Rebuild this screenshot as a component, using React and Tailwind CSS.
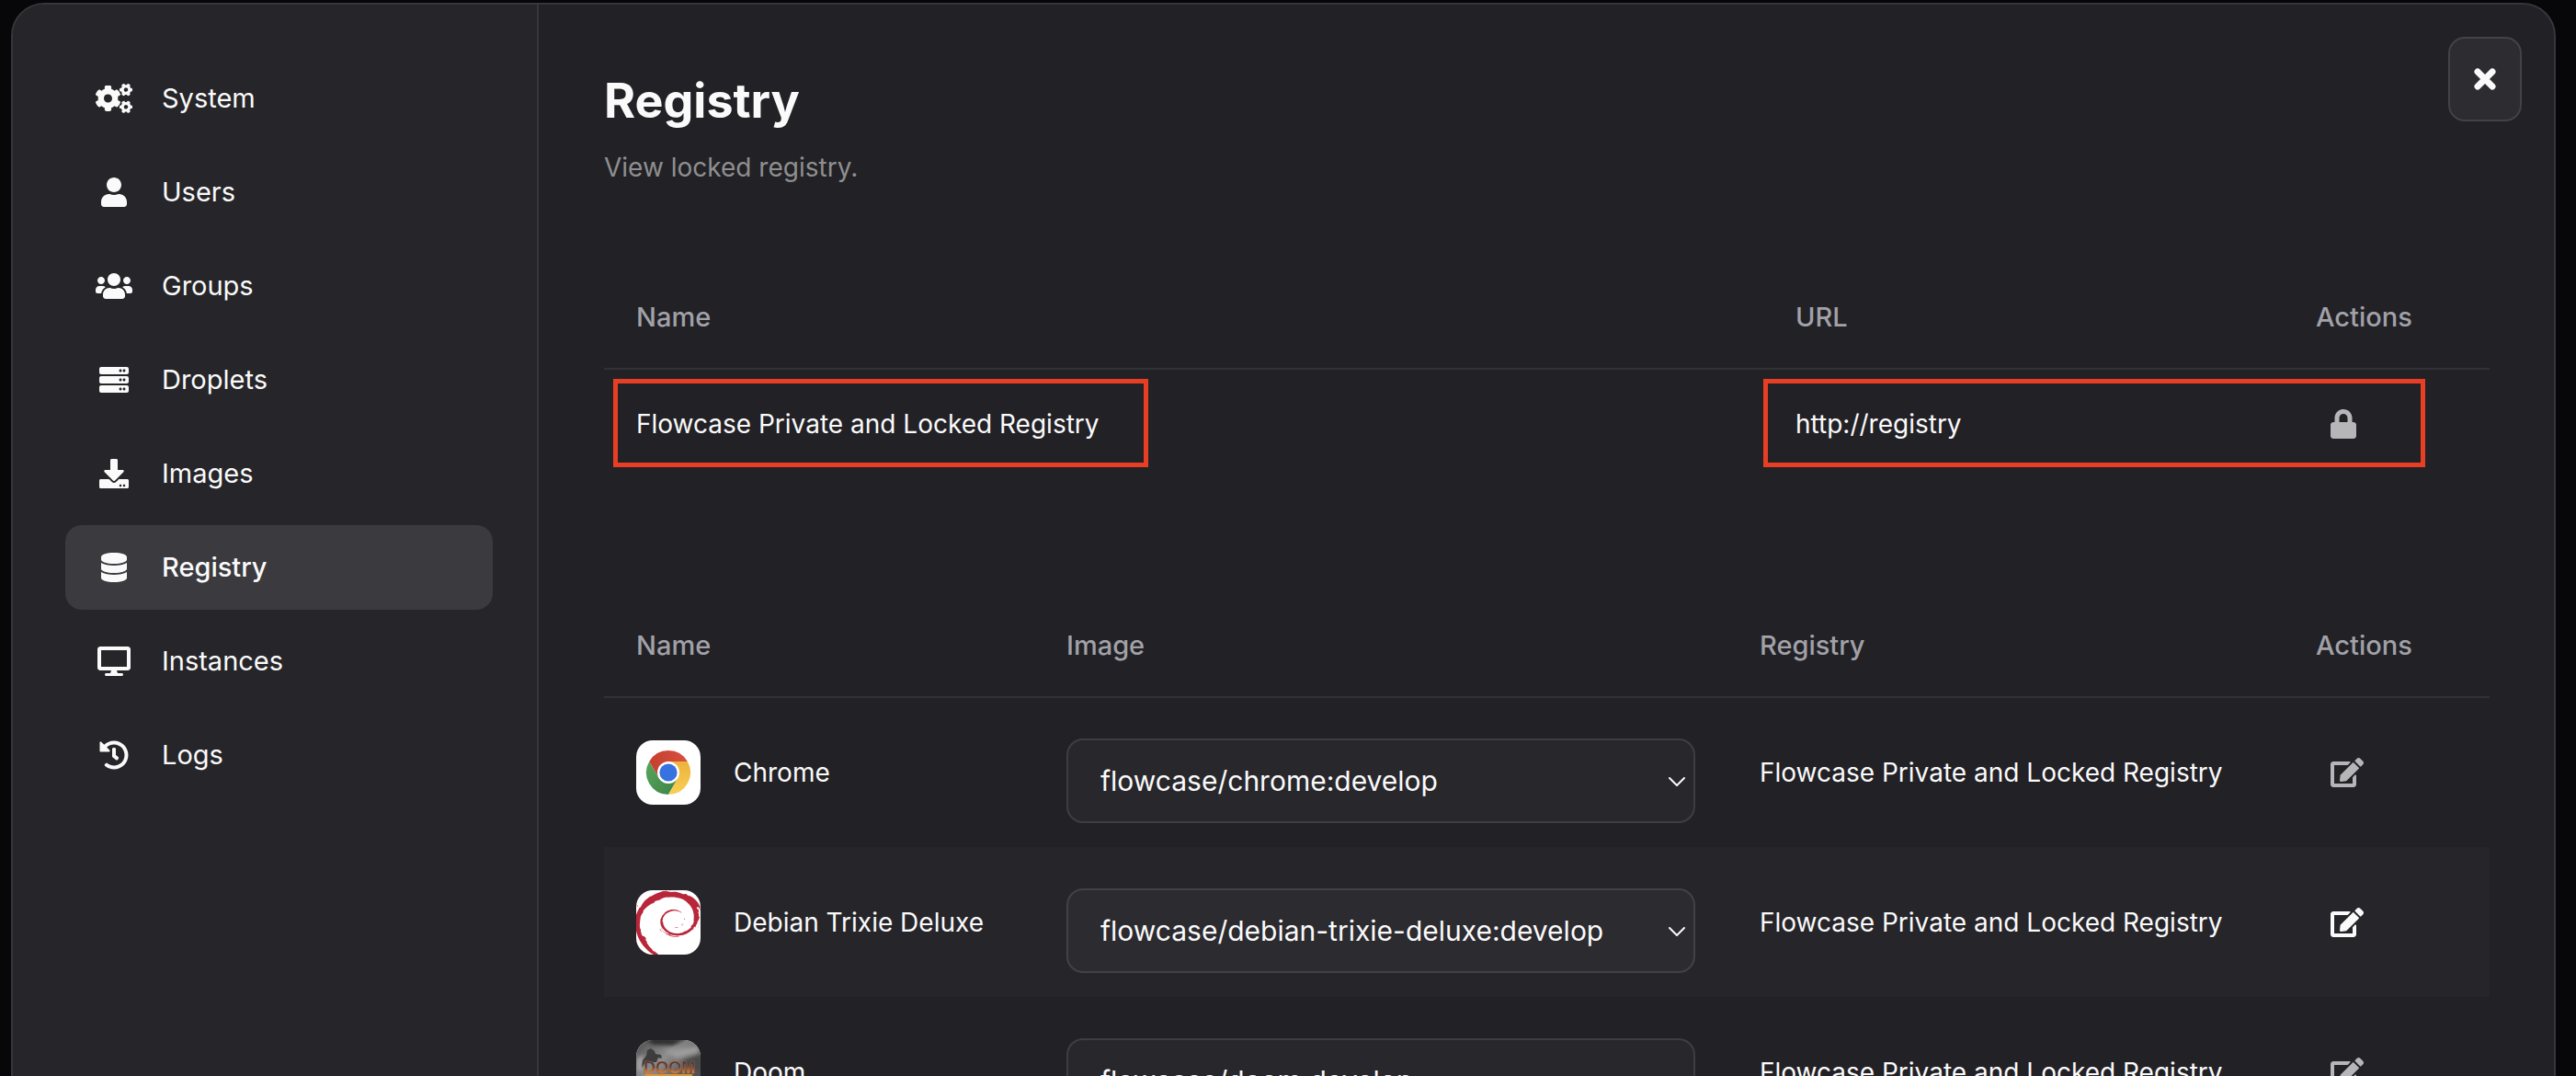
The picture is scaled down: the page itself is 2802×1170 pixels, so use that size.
import React from "react";
import {
  FaCogs,
  FaUser,
  FaUsers,
  FaServer,
  FaDownload,
  FaDatabase,
  FaDesktop,
  FaHistory,
  FaLock,
  FaEdit,
} from "react-icons/fa";
import { SiDebian } from "react-icons/si";

const NAV = [
  { label: "System", Icon: FaCogs, size: "h-8 w-10" },
  { label: "Users", Icon: FaUser, size: "h-8 w-7" },
  { label: "Groups", Icon: FaUsers, size: "h-8 w-10" },
  { label: "Droplets", Icon: FaServer, size: "h-8 w-8" },
  { label: "Images", Icon: FaDownload, size: "h-8 w-8" },
  { label: "Registry", Icon: FaDatabase, size: "h-8 w-7", active: true },
  { label: "Instances", Icon: FaDesktop, size: "h-8 w-9" },
  { label: "Logs", Icon: FaHistory, size: "h-8 w-8" },
];

const REGISTRY = "Flowcase Private and Locked Registry";

function ChromeLogo() {
  return (
    <svg viewBox="-35 -35 70 70" className="size-full" aria-hidden="true">
      <defs>
        <linearGradient id="chrome-red" x1="0" x2="1">
          <stop offset="0" stopColor="#c5402f" />
          <stop offset="1" stopColor="#d9503f" />
        </linearGradient>
        <linearGradient id="chrome-green" x1="0" x2="1" y1="0" y2="1">
          <stop offset="0" stopColor="#58a55c" />
          <stop offset="1" stopColor="#3d8446" />
        </linearGradient>
        <linearGradient id="chrome-yellow" x1="0" x2="0" y1="0" y2="1">
          <stop offset="0" stopColor="#edb23a" />
          <stop offset="1" stopColor="#f8d057" />
        </linearGradient>
      </defs>
      <path d="M-20.8 -12A24 24 0 0 1 20.8 -12L0 -12L-10.4 6Z" fill="url(#chrome-red)" />
      <path d="M-20.8 -12A24 24 0 0 0 0 24L10.4 6L-10.4 6Z" fill="url(#chrome-green)" />
      <path d="M20.8 -12A24 24 0 0 1 0 24L10.4 6L0 -12Z" fill="url(#chrome-yellow)" />
      <circle r="12" fill="#fff" />
      <circle r="9.6" fill="#3871e0" />
    </svg>
  );
}

function DebianLogo() {
  return (
    <SiDebian
      className="h-[76px] w-[90px] shrink-0 text-[#b9263a]"
      preserveAspectRatio="none"
      aria-hidden="true"
    />
  );
}

function DoomLogo() {
  return (
    <svg viewBox="0 0 70 70" className="size-full" aria-hidden="true">
      <defs>
        <linearGradient id="doom-sky" x1="0" x2="1" y1="0" y2="1">
          <stop offset="0" stopColor="#4c4c4c" />
          <stop offset="0.35" stopColor="#8e8e8e" />
          <stop offset="0.6" stopColor="#5f5f5f" />
          <stop offset="1" stopColor="#3a3a3a" />
        </linearGradient>
        <linearGradient id="doom-word" x1="0" x2="0" y1="0" y2="1">
          <stop offset="0.1" stopColor="#27394a" />
          <stop offset="0.45" stopColor="#3f4650" />
          <stop offset="0.7" stopColor="#c9762a" />
          <stop offset="1" stopColor="#f0c648" />
        </linearGradient>
        <filter id="doom-soft">
          <feGaussianBlur stdDeviation="2" />
        </filter>
      </defs>
      <rect width="70" height="70" fill="url(#doom-sky)" />
      <g filter="url(#doom-soft)">
        <path d="M10 -2H56L40 6L18 5Z" fill="#2e2e2e" />
        <path d="M32 12L68 6V14L44 20Z" fill="#9c9c9c" />
        <path d="M50 22L72 14V34H60Z" fill="#4a4a4a" />
        <path d="M0 20L8 16V34H0Z" fill="#a0a0a0" />
      </g>
      <path d="M12 11L16 9L20 12L21 15L27 16L28 20L24 19L22 24H10L6 30L7 22L11 17Z" fill="#3d3d3d" />
      <text
        x="36"
        y="36"
        textAnchor="middle"
        fontFamily="Liberation Sans, Arial, sans-serif"
        fontWeight="700"
        fontSize="18"
        fill="url(#doom-word)"
        stroke="#c9602c"
        strokeWidth="0.5"
      >
        DOOM
      </text>
      <path d="M10 37H61V50H10Z" fill="#d9963a" />
    </svg>
  );
}

const DROPLETS = [
  { name: "Chrome", image: "flowcase/chrome:develop", Logo: ChromeLogo, muted: true },
  { name: "Debian Trixie Deluxe", image: "flowcase/debian-trixie-deluxe:develop", Logo: DebianLogo },
  { name: "Doom", image: "flowcase/doom:develop", Logo: DoomLogo, muted: true },
];

function Sidebar() {
  return (
    <nav className="flex w-[572px] shrink-0 flex-col gap-2.5 border-r-2 border-[#37363b] bg-[#262529] pt-14 pr-12 pl-[57px] text-[29px]">
      {NAV.map(({ label, Icon, size, active }) => (
        <button
          key={label}
          type="button"
          aria-current={active ? "page" : undefined}
          className={
            active
              ? "flex h-[92px] items-center gap-8 rounded-[18px] bg-[#3b3a3f] px-[33px] text-left font-medium"
              : "flex h-[92px] items-center gap-8 rounded-[18px] px-[33px] text-left"
          }
        >
          <span className="flex w-10 justify-center">
            <Icon className={size} aria-hidden="true" />
          </span>
          {label}
        </button>
      ))}
    </nav>
  );
}

function RegistryTable() {
  return (
    <table className="w-full table-fixed text-left">
      <thead>
        <tr className="h-28 border-b-2 border-[#323136] text-[29px] text-[#a1a1a8]">
          <th className="px-[35px] font-medium">Name</th>
          <th className="w-[566px] px-[35px] font-medium">URL</th>
          <th className="w-[224px] px-[35px] font-medium">Actions</th>
        </tr>
      </thead>
      <tbody>
        <tr className="h-[118px]">
          <td className="relative px-[35px]">
            {REGISTRY}
            <span className="absolute top-2.5 left-2.5 h-24 w-[582px] border-5 border-[#e83e24]" />
          </td>
          <td className="relative px-[35px]">
            http://registry
            <span className="absolute top-2.5 left-0 h-24 w-[720px] border-5 border-[#e83e24]" />
          </td>
          <td className="px-[51px]">
            <FaLock role="img" aria-label="Locked" className="h-8 w-7 text-[#b6b6b8]" />
          </td>
        </tr>
      </tbody>
    </table>
  );
}

function DropletTable() {
  return (
    <table className="w-full table-fixed text-left">
      <thead>
        <tr className="h-28 border-b-2 border-[#323136] text-[29px] text-[#a1a1a8]">
          <th className="w-[468px] px-[35px] font-medium">Name</th>
          <th className="px-[35px] font-medium">Image</th>
          <th className="w-[605px] px-[35px] font-medium">Registry</th>
          <th className="w-[224px] px-[35px] font-medium">Actions</th>
        </tr>
      </thead>
      <tbody>
        {DROPLETS.map(({ name, image, Logo, muted }) => (
          <tr key={name} className="h-[163px] even:bg-[#26252a]">
            <td className="px-[35px]">
              <div className="flex items-center gap-9">
                <span className="flex size-[70px] shrink-0 items-start justify-center overflow-hidden rounded-[18px] bg-white">
                  <Logo />
                </span>
                {name}
              </div>
            </td>
            <td className="px-[35px]">
              <div className="relative mt-[18px]">
                <select
                  aria-label={name + " image"}
                  defaultValue={image}
                  className="block h-[92px] w-full appearance-none rounded-[18px] border-2 border-white/10 bg-white/3 px-[35px] text-[30px]"
                >
                  <option>{image}</option>
                </select>
                <svg
                  viewBox="0 0 18 10"
                  className="pointer-events-none absolute top-[42px] right-[11px] h-2.5 w-[18px]"
                  fill="none"
                  stroke="currentColor"
                  strokeWidth="2"
                  strokeLinecap="round"
                  aria-hidden="true"
                >
                  <path d="M1 1L9 9L17 1" />
                </svg>
              </div>
            </td>
            <td className="px-[35px]">{REGISTRY}</td>
            <td className="px-[51px]">
              <button
                type="button"
                aria-label={"Edit " + name}
                className={muted ? "block text-[#b6b6b8]" : "block text-[#fafafa]"}
              >
                <FaEdit className="h-8 w-9" aria-hidden="true" />
              </button>
            </td>
          </tr>
        ))}
      </tbody>
    </table>
  );
}

export default function App() {
  return (
    <div className="h-screen overflow-hidden bg-[#070709] pt-[3px] pr-[22px] pl-3 font-[Inter,sans-serif] text-[28px] leading-10 text-[#fafafa]">
      <div className="relative flex min-h-[130vh] overflow-hidden rounded-[36px] border-2 border-[#37363b] bg-[#222126]">
        <Sidebar />
        <main className="min-w-0 flex-1 pt-[73px] pr-[70px] pl-[71px]">
          <h1 className="text-[52px] leading-16 font-bold">Registry</h1>
          <p className="mt-5 text-[#8f8f8f]">View locked registry.</p>
          <div className="mt-[87px]">
            <RegistryTable />
          </div>
          <div className="mt-[127px]">
            <DropletTable />
          </div>
        </main>
        <button
          type="button"
          aria-label="Close"
          className="absolute top-[35px] right-[35px] flex h-[92px] w-20 items-center justify-center rounded-[18px] border-2 border-[#434247] bg-[#2d2c31]"
        >
          <svg viewBox="0 0 24 24" className="size-6" stroke="currentColor" strokeWidth="7" strokeLinecap="round" aria-hidden="true">
            <path d="M4 4L20 20M20 4L4 20" />
          </svg>
        </button>
      </div>
    </div>
  );
}
